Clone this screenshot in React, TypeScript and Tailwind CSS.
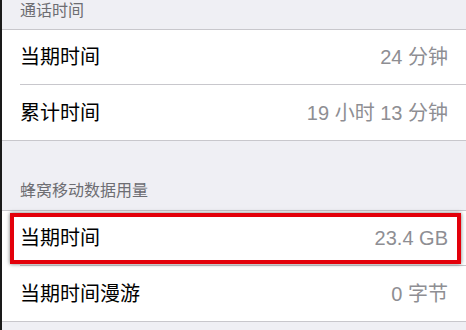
const font = { fontFamily: '"Liberation Sans", "Noto Sans CJK SC", sans-serif' }

interface Row {
  label: string
  value: string
  marked?: boolean
}

function Section({ title, rows, headerClass }: { title: string; rows: Row[]; headerClass: string }) {
  return (
    <div>
      <div className={`flex pl-[18px] text-[16px] text-[#6d6d72] ${headerClass}`}>{title}</div>
      <div className="bg-white border-y border-[#c8c7cc]">
        {rows.map((row, i) => (
          <div key={row.label} className="relative pl-[18px]">
            <div
              className={`h-[55px] flex items-center justify-between pr-[18px] ${
                i < rows.length - 1 ? 'border-b border-[#c8c7cc]' : ''
              }`}
            >
              <span className="text-[20px] text-black">{row.label}</span>
              <span className="text-[20px] text-[#8e8e93]">{row.value}</span>
            </div>
            {row.marked && (
              <div className="absolute left-[8px] right-[5px] top-[2px] bottom-[2px] border-[4px] border-[#e3000a] shadow-[0_0_4px_rgba(0,0,0,0.55)]" />
            )}
          </div>
        ))}
      </div>
    </div>
  )
}

export default function App() {
  return (
    <div
      className="w-[466px] h-[330px] overflow-hidden bg-[#efeff4] border-l-2 border-[#1a1a1a]"
      style={font}
    >
      <Section
        title="通话时间"
        headerClass="h-[29px] items-start leading-[22px]"
        rows={[
          { label: '当期时间', value: '24 分钟' },
          { label: '累计时间', value: '19 小时 13 分钟' },
        ]}
      />
      <Section
        title="蜂窝移动数据用量"
        headerClass="h-[69px] items-end pb-[8px] leading-[22px]"
        rows={[
          { label: '当期时间', value: '23.4 GB', marked: true },
          { label: '当期时间漫游', value: '0 字节' },
        ]}
      />
    </div>
  )
}
